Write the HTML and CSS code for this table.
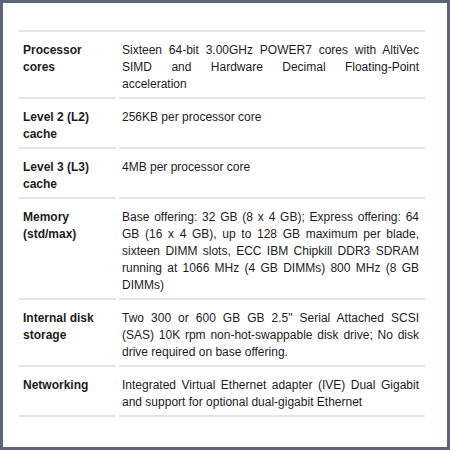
FILE: index.html
```html
<!DOCTYPE html>
<html lang="en">
<head>
    <meta charset="UTF-8">
    <meta name="viewport" content="width=device-width, initial-scale=1.0">
    <title>Specifications</title>
    <link rel="stylesheet" href="styles.css">
</head>
<body>
    <div class="frame">
        <div class="specs">
            <div class="row">
                <div class="label">Processor cores</div>
                <div class="value">Sixteen 64-bit 3.00GHz POWER7 cores with AltiVec SIMD and Hardware Decimal Floating-Point acceleration</div>
            </div>
            <div class="row">
                <div class="label">Level 2 (L2) cache</div>
                <div class="value">256KB per processor core</div>
            </div>
            <div class="row">
                <div class="label">Level 3 (L3) cache</div>
                <div class="value">4MB per processor core</div>
            </div>
            <div class="row">
                <div class="label">Memory (std/max)</div>
                <div class="value">Base offering: 32 GB (8 x 4 GB); Express offering: 64 GB (16 x 4 GB), up to 128 GB maximum per blade, sixteen DIMM slots, ECC IBM Chipkill DDR3 SDRAM running at 1066 MHz (4 GB DIMMs) 800 MHz (8 GB DIMMs)</div>
            </div>
            <div class="row">
                <div class="label">Internal disk storage</div>
                <div class="value">Two 300 or 600 GB GB 2.5" Serial Attached SCSI (SAS) 10K rpm non-hot-swappable disk drive; No disk drive required on base offering.</div>
            </div>
            <div class="row">
                <div class="label">Networking</div>
                <div class="value">Integrated Virtual Ethernet adapter (IVE) Dual Gigabit and support for optional dual-gigabit Ethernet</div>
            </div>
        </div>
    </div>
</body>
</html>
```

FILE: styles.css
```css
body {
    margin: 0;
    background-color: #fff;
    font-family: "Liberation Sans", Arial, sans-serif;
    font-size: 12px;
    line-height: 17px;
    color: #1c1c1c;
}
.frame {
    width: 450px;
    height: 450px;
    box-sizing: border-box;
    border: 3px solid #5b6579;
    padding: 27px 22px 0 16px;
}
.specs {
    border-top: 2px solid #e4e4e4;
}
.row {
    display: grid;
    grid-template-columns: 97px 1fr;
    column-gap: 3px;
}
.label, .value {
    padding: 10px 0 4px 0;
    border-bottom: 2px solid #e4e4e4;
}
.label {
    font-weight: bold;
    padding-left: 4px;
    padding-right: 4px;
}
.value {
    padding-left: 3px;
    padding-right: 6px;
    text-align: justify;
}
```
